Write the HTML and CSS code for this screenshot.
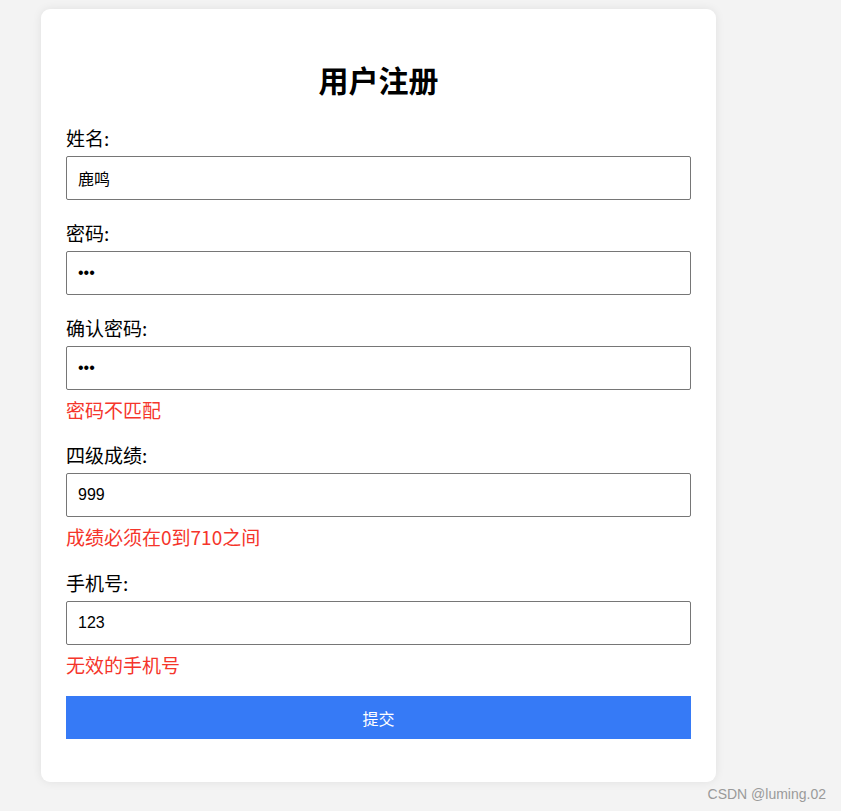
FILE: index.html
```html
<!DOCTYPE html>
<html lang="zh-CN">
<head>
<meta charset="utf-8">
<title>用户注册</title>
<link rel="stylesheet" href="styles.css">
</head>
<body>
<div class="page">
  <div class="card">
    <h2 class="title">用户注册</h2>
    <form class="form">
      <div class="group">
        <label class="label">姓名:</label>
        <input class="input" type="text" value="鹿鸣">
      </div>
      <div class="group">
        <label class="label">密码:</label>
        <input class="input" type="password" value="123">
      </div>
      <div class="group">
        <label class="label">确认密码:</label>
        <input class="input" type="password" value="124">
        <div class="error">密码不匹配</div>
      </div>
      <div class="group group-score">
        <label class="label">四级成绩:</label>
        <input class="input" type="text" value="999">
        <div class="error">成绩必须在0到710之间</div>
      </div>
      <div class="group group-last">
        <label class="label">手机号:</label>
        <input class="input" type="text" value="123">
        <div class="error">无效的手机号</div>
      </div>
      <button class="submit" type="button">提交</button>
    </form>
  </div>
</div>
<div class="watermark">CSDN @luming.02</div>
</body>
</html>
```
FILE: styles.css
```css
html, body {
  margin: 0;
  padding: 0;
}
body {
  background: #f3f3f3;
  font-family: "Microsoft YaHei", "Noto Sans CJK SC", "Liberation Sans", sans-serif;
  color: #000;
  min-height: 811px;
  position: relative;
}
.page {
  padding: 9px 0 0 41px;
}
.card {
  width: 675px;
  box-sizing: border-box;
  background: #fff;
  border-radius: 9px;
  box-shadow: 0 0 10px rgba(0, 0, 0, 0.08);
  padding: 53px 25px 43px;
}
.title {
  margin: 0 0 31px;
  text-align: center;
  font-size: 30px;
  line-height: 34px;
  font-weight: bold;
}
.form {
  display: flex;
  flex-direction: column;
}
.group {
  display: flex;
  flex-direction: column;
  margin-bottom: 22px;
}
.group-score {
  margin-bottom: 23px;
}
.group-last {
  margin-bottom: 19px;
}
.label {
  font-size: 19px;
  line-height: 22px;
  margin-bottom: 7px;
}
.input {
  height: 44px;
  box-sizing: border-box;
  border: 1px solid #767676;
  border-radius: 2px;
  padding: 0 11px;
  font-family: "Liberation Sans", "Noto Sans CJK SC", sans-serif;
  font-size: 16px;
  color: #000;
  background: #fff;
  outline: none;
}
.error {
  color: #f5352b;
  font-size: 19px;
  line-height: 24px;
  margin-top: 8px;
}
.submit {
  height: 43px;
  border: none;
  background: #367af6;
  color: #fff;
  font-family: "Microsoft YaHei", "Noto Sans CJK SC", sans-serif;
  font-size: 16px;
  cursor: pointer;
}
.watermark {
  position: absolute;
  right: 15px;
  bottom: 9px;
  font-family: "Liberation Sans", sans-serif;
  font-size: 14px;
  color: #9a9a9a;
}
```
